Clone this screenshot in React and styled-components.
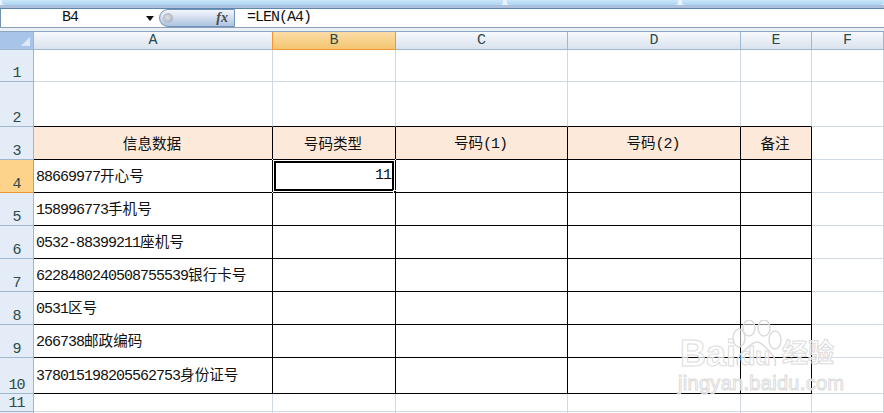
import React from 'react';
import styled, { createGlobalStyle } from 'styled-components';

const mono = `"Liberation Mono", "Noto Sans CJK SC", monospace`;
const cjk = `"Noto Sans CJK SC", "Liberation Sans", sans-serif`;

const Global = createGlobalStyle`
  html, body { margin: 0; padding: 0; background: #fff; }
`;

const columns = ['A', 'B', 'C', 'D', 'E', 'F'];
const rowHeights = [32, 45, 33, 33, 33, 33, 33, 33, 33, 36, 18, 18];

const titles = [['信息数据'], ['号码类型'], ['号码', '(1)'], ['号码', '(2)'], ['备注']];

const rowsData = [
  ['88669977', '开心号'],
  ['158996773', '手机号'],
  ['0532-88399211', '座机号'],
  ['6228480240508755539', '银行卡号'],
  ['0531', '区号'],
  ['266738', '邮政编码'],
  ['378015198205562753', '身份证号'],
];

const Page = styled.div`
  width: 884px;
  height: 413px;
  overflow: hidden;
  position: relative;
  background: #fff;
`;

const Ribbon = styled.div`
  display: flex;
  gap: 4px;
  height: 8px;
  padding-left: 2px;
  background: linear-gradient(#e6f3fb 0 5px, #aec0dc 5px);
  border-bottom: 1px solid #5d87ad;
`;

const RibbonTab = styled.div`
  flex: ${(p) => (p.$w ? `0 0 ${p.$w}px` : 1)};
  height: 5px;
  background: linear-gradient(#cbe6f8, #a9d5f2);
  border-radius: 0 0 3px 3px;
`;

const FormulaBar = styled.div`
  display: flex;
  height: 18px;
  background: #fff;
  border-left: 1px solid #6f93b5;
  font: 15px/18px ${mono};
  letter-spacing: -1px;
  color: #111;
`;

const NameBox = styled.div`
  flex: 0 0 158px;
  position: relative;
  text-align: center;
  padding-right: 20px;
  box-sizing: border-box;
`;

const DropArrow = styled.i`
  position: absolute;
  left: 145px;
  top: 7px;
  border: 4px solid transparent;
  border-top: 5px solid #111;
  border-bottom: 0;
`;

const FxPill = styled.div`
  flex: 0 0 76px;
  height: 18px;
  box-sizing: border-box;
  display: flex;
  align-items: center;
  justify-content: space-between;
  padding: 0 6px 0 3px;
  background: linear-gradient(#f4f7fc, #adc3e0);
  border: 1px solid #6f93ba;
  border-radius: 9px 0 0 9px;
`;

const Knob = styled.i`
  width: 10px;
  height: 10px;
  border-radius: 50%;
  background: radial-gradient(circle at 45% 45%, #dfe2e7, #97a1ad);
`;

const FxLabel = styled.span`
  font: italic bold 14px/16px "Liberation Serif", serif;
  letter-spacing: 0;
  color: #4c4c4c;
`;

const FormulaText = styled.div`
  padding-left: 12px;
`;

const BarGap = styled.div`
  height: 5px;
  background: #e9f0f8;
  border-top: 1px solid #8b9fb3;
  border-bottom: 1px solid #8ca6bf;
  box-sizing: border-box;
`;

const Sheet = styled.div`
  display: grid;
  grid-template-columns: 34px 239px 123px 172px 173px 71px 72px;
  grid-template-rows: 18px ${rowHeights.map((h) => `${h}px`).join(' ')};
`;

const Corner = styled.div`
  position: relative;
  background: #a9c4e9;
  border-right: 1px solid #9eb6ce;
  border-bottom: 1px solid #9eb6ce;
  box-sizing: border-box;
  &::after {
    content: '';
    position: absolute;
    right: 3px;
    bottom: 3px;
    width: 9px;
    height: 9px;
    background: #dfe8f5;
    clip-path: polygon(100% 0, 100% 100%, 0 100%);
  }
`;

const ColHead = styled.div`
  display: flex;
  align-items: center;
  justify-content: center;
  box-sizing: border-box;
  font: 15px ${mono};
  color: #2c4a4a;
  background: ${(p) =>
    p.$active
      ? 'linear-gradient(#fbdda6, #f4c56f)'
      : 'linear-gradient(#f7f9fc, #d9e2ee)'};
  border-right: 1px solid ${(p) => (p.$active ? '#f29536' : '#9eb6ce')};
  border-bottom: 1px solid ${(p) => (p.$active ? '#f29536' : '#9eb6ce')};
  box-shadow: ${(p) => (p.$active ? '-1px 0 0 #f29536' : 'none')};
`;

const RowHead = styled.div`
  display: flex;
  align-items: flex-end;
  justify-content: center;
  box-sizing: border-box;
  padding-bottom: 1px;
  font: 15px/13px ${mono};
  letter-spacing: -1px;
  color: #2c4a4a;
  background: ${(p) => (p.$active ? '#fdd28a' : '#e4ecf7')};
  border-right: 1px solid ${(p) => (p.$active ? '#f29536' : '#9eb6ce')};
  border-bottom: 1px solid ${(p) => (p.$active ? '#f29536' : '#9eb6ce')};
`;

const Cell = styled.div`
  position: relative;
  display: flex;
  align-items: center;
  justify-content: ${(p) => p.$align || 'flex-start'};
  box-sizing: border-box;
  padding: 0 4px 0 2px;
  font: 14.6px/18px ${cjk};
  color: #111;
  white-space: nowrap;
  background: ${(p) => (p.$title ? '#fce9da' : '#fff')};
  border-right: 1px solid ${(p) => (p.$right ? '#000' : '#d0d7e5')};
  border-bottom: 1px solid ${(p) => (p.$bottom ? '#000' : '#d0d7e5')};
`;

const Value = styled.span`
  display: inline-block;
`;

const Digits = styled.span`
  font: 15px/18px ${mono};
  letter-spacing: -1px;
`;

const Selection = styled.div`
  position: absolute;
  left: -1px;
  top: -1px;
  right: -1px;
  bottom: -1px;
  border: 1px solid #000;
  box-shadow: inset 0 0 0 1px #fff, inset 0 0 0 3px #000;
  &::before {
    content: '';
    position: absolute;
    left: -1px;
    top: -1px;
    width: 1px;
    height: 1px;
    background: #fff;
    box-shadow: 123px 0 #fff, 0 33px #fff;
  }
  &::after {
    content: '';
    position: absolute;
    right: -4px;
    bottom: -4px;
    width: 4px;
    height: 4px;
    background: #000;
    border: 1px solid #fff;
  }
`;

const Watermark = styled.div`
  position: absolute;
  left: 676px;
  top: 320px;
  width: 208px;
  height: 93px;
  pointer-events: none;
`;

const Paw = styled.svg`
  position: absolute;
  left: 0;
  top: 0;
`;

const MarkWord = styled.span`
  position: absolute;
  left: ${(p) => p.$x}px;
  top: ${(p) => p.$y}px;
  font: ${(p) => p.$weight || 700} ${(p) => p.$size}px/1 "Liberation Sans", "Noto Sans CJK SC", sans-serif;
  color: rgba(255, 255, 255, 0.7);
  -webkit-text-stroke: 1px #dcdcdc;
  letter-spacing: ${(p) => p.$space || 0}px;
`;

const pawParts = [
  { cx: 63, cy: 18, rx: 6, ry: 9 },
  { cx: 73, cy: 8, rx: 6, ry: 8 },
  { cx: 88, cy: 8, rx: 6, ry: 8 },
  { cx: 99, cy: 20, rx: 6, ry: 9 },
];

const App = () => {
  return (
    <Page>
      <Global />
      <Ribbon>
        <RibbonTab $w={501} />
        <RibbonTab $w={171} />
        <RibbonTab />
      </Ribbon>
      <FormulaBar>
        <NameBox>
          B4
          <DropArrow />
        </NameBox>
        <FxPill>
          <Knob />
          <FxLabel>fx</FxLabel>
        </FxPill>
        <FormulaText>=LEN(A4)</FormulaText>
      </FormulaBar>
      <BarGap />
      <Sheet>
        <Corner />
        {columns.map((c) => (
          <ColHead key={c} $active={c === 'B'}>{c}</ColHead>
        ))}
        {rowHeights.map((_, i) => {
          const n = i + 1;
          const data = n >= 4 && n <= 10 ? rowsData[n - 4] : null;
          return (
            <React.Fragment key={n}>
              {/* row 12 only shows its top edge in the window, no label */}
              <RowHead $active={n === 4}>{n < 12 ? n : ''}</RowHead>
              {columns.map((c, j) => {
                const inTable = j < 5 && n >= 3 && n <= 10;
                return (
                  <Cell
                    key={c}
                    $right={inTable}
                    $bottom={inTable || (j < 5 && n === 2)}
                    $title={n === 3 && j < 5}
                    $align={n === 3 ? 'center' : n === 4 && j === 1 ? 'flex-end' : undefined}
                  >
                    {n === 3 && j < 5 && (
                      <Value>
                        {titles[j][0]}
                        {titles[j][1] && <Digits>{titles[j][1]}</Digits>}
                      </Value>
                    )}
                    {data && j === 0 && (
                      <Value>
                        <Digits>{data[0]}</Digits>
                        {data[1]}
                      </Value>
                    )}
                    {n === 4 && j === 1 && (
                      <>
                        <Digits>11</Digits>
                        <Selection />
                      </>
                    )}
                  </Cell>
                );
              })}
            </React.Fragment>
          );
        })}
      </Sheet>
      <Watermark>
        <Paw width="120" height="60" viewBox="0 0 120 60">
          <g fill="rgba(255,255,255,0.55)" stroke="#dcdcdc" strokeWidth="1.5">
            {pawParts.map((p) => (
              <ellipse key={p.cx} {...p} />
            ))}
            <path d="M62 46c-3-8 3-13 8-17s7-7 11-7 7 4 11 8 9 9 7 16" fill="none" />
          </g>
        </Paw>
        <MarkWord $x={4} $y={16} $size={36}>Bai</MarkWord>
        <MarkWord $x={64} $y={24} $size={25}>du</MarkWord>
        <MarkWord $x={106} $y={20} $size={26}>经验</MarkWord>
        <MarkWord $x={2} $y={53} $size={20} $weight={400} $space={0.3}>jingyan.baidu.com</MarkWord>
      </Watermark>
    </Page>
  );
};

export default App;
